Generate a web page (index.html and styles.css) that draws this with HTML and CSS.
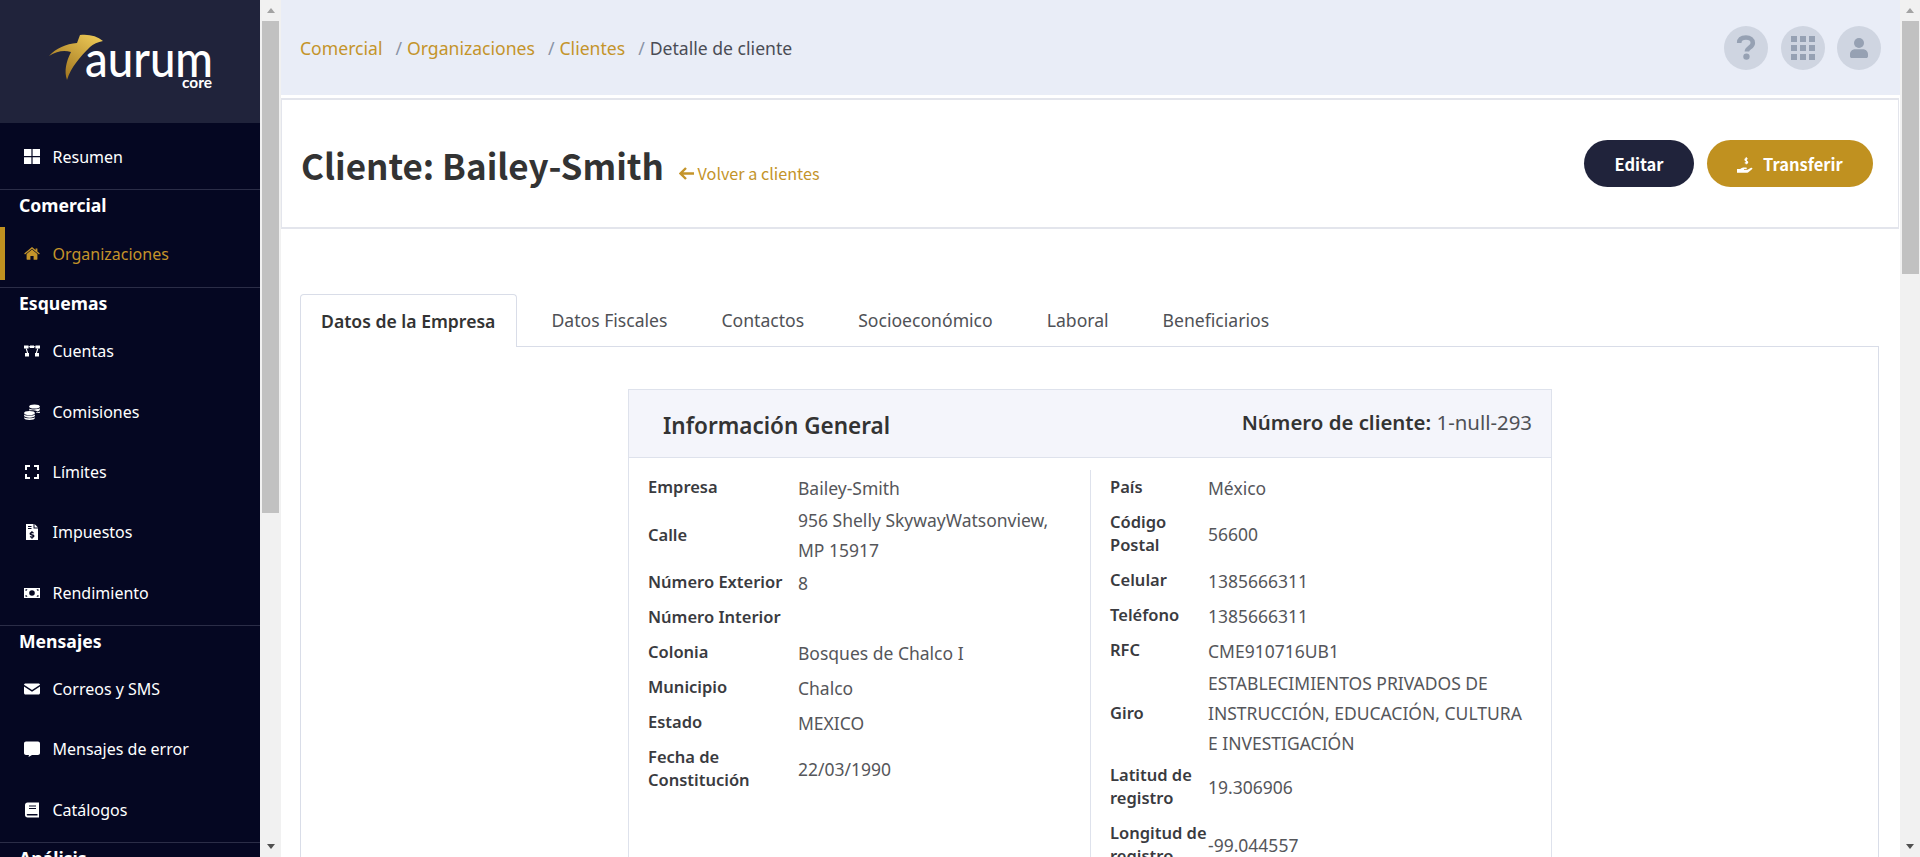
FILE: index.html
```html
<!DOCTYPE html>
<html lang="es">
<head>
  <meta charset="UTF-8" />
  <meta name="viewport" content="width=device-width, initial-scale=1" />
  <title>Detalle de cliente - Aurum Core</title>
  <link rel="stylesheet" href="styles.css">
</head>
<body>
  <aside class="sidebar">
    <div class="brand">
      <svg class="brand-logo" width="260" height="123" viewBox="0 0 260 123">
        <defs>
          <linearGradient id="gold" x1="1" y1="0" x2="0.2" y2="1">
            <stop offset="0" stop-color="#f2cf5a"/>
            <stop offset="1" stop-color="#9c701c"/>
          </linearGradient>
        </defs>
        <path fill="url(#gold)" d="M49 56C56 48 66 44 77 43L80 35C89 34 97 36 103 41C98 42 93 44 90 47C80 57 71 67 67 80C64 71 66 62 71 52C64 50 57 51 49 56Z"/>
        <text class="brand-name" x="85" y="77" textLength="128" lengthAdjust="spacingAndGlyphs">aurum</text>
        <text class="brand-sub" x="182" y="88" textLength="30" lengthAdjust="spacingAndGlyphs">core</text>
      </svg>
    </div>

    <nav class="menu">
      <div class="menu-group menu-group-top">
        <a class="menu-item">
          <svg class="menu-icon" viewBox="0 0 16 16"><path d="M0 0h7.400v7H0zM8.600 0H16v7H8.600zM0 8.200h7.400V15H0zM8.600 8.200H16V15H8.600z"/></svg>
          Resumen
        </a>
      </div>
      <div class="menu-group">
        <div class="menu-title">Comercial</div>
        <a class="menu-item active">
          <svg class="menu-icon" viewBox="0 0 16 16"><path d="M8 3.600 2.600 8v5.200c0 .3.200.5.500.5h3.300V10h3.200v3.700h3.300c.3 0 .5-.2.500-.5V8z"/><path d="M8 1 .2 7.400l.8 1L8 2.800l7 5.600.8-1L13.400 5.500V2.400h-1.800v1.500z"/></svg>
          Organizaciones
        </a>
      </div>
      <div class="menu-group">
        <div class="menu-title">Esquemas</div>
        <a class="menu-item">
          <svg class="menu-icon" viewBox="0 0 16 16"><path d="M0 2.500h4.500v3H0zM6 2.500h4v2.500H6zM11.500 2.500H16v3h-4.500zM1 10h4v3.500H1zM11 10h4v3.500h-4z"/><path d="M4.500 3.200H6v1H4.500zM10 3.200h1.500v1H10zM1.600 5.500h1.200l1.400 4.500H3zM13.200 5.500h1.200L13 10h-1.200z"/></svg>
          Cuentas
        </a>
        <a class="menu-item">
          <svg class="menu-icon" viewBox="0 0 16 16"><ellipse cx="10.500" cy="2.600" rx="5.300" ry="2"/><path d="M5.300 4.600c1 1.200 9 1.500 10.500-.5v1.600c0 .8-1.200 1.400-2.600 1.700-1.500-1-5.500-1.300-7.900-.9z"/><ellipse cx="5.500" cy="9" rx="5.400" ry="2"/><path d="M.1 10.400c1 1.600 9.600 1.600 10.800 0v1.400c0 1.100-2.400 1.900-5.400 1.900S.1 12.900.1 11.800z"/><path d="M.1 13.200c1 1.500 9.600 1.500 10.800 0v.8c0 1.200-2.400 2-5.400 2s-5.400-.8-5.400-2zM12 9h3.800V7.400c-1 .6-2.400 1-3.800 1.200z"/></svg>
          Comisiones
        </a>
        <a class="menu-item">
          <svg class="menu-icon" viewBox="0 0 16 16"><path d="M1 1h5v2H3v3H1zM10 1h5v5h-2V3h-3zM1 10h2v3h3v2H1zM13 10h2v5h-5v-2h3z"/></svg>
          Límites
        </a>
        <a class="menu-item">
          <svg class="menu-icon" viewBox="0 0 16 16"><path fill-rule="evenodd" d="M2 0h7.500v4.500H14V16H2zM4 2v1h3.500V2zM4 4v1h3.500V4zM7.400 7v1c-1.200.2-1.800.8-1.800 1.700 0 1 .8 1.400 2 1.700.9.200 1.100.4 1.100.7 0 .3-.3.500-.8.500-.5 0-1-.2-1.400-.5l-.8.900c.5.400 1.100.7 1.700.8v1h1.200v-1c1.200-.2 1.800-.9 1.800-1.800 0-1-.8-1.400-2-1.700-.9-.2-1.100-.4-1.100-.6 0-.3.300-.5.800-.5.400 0 .8.100 1.200.4l.7-.9c-.4-.3-1-.6-1.500-.7V7z"/><path d="M10.500 0 14 3.500h-3.500z"/></svg>
          Impuestos
        </a>
        <a class="menu-item">
          <svg class="menu-icon" viewBox="0 0 16 16"><path fill-rule="evenodd" d="M0 3h16v10H0zM8 5.200a2.800 2.800 0 1 0 0 5.600 2.800 2.800 0 0 0 0-5.600zM1.500 4.300v1.800a1.900 1.900 0 0 0 1.900-1.800zM12.600 4.300a1.900 1.900 0 0 0 1.900 1.800V4.300zM1.500 9.900v1.800h1.900a1.900 1.900 0 0 0-1.900-1.800zM14.500 9.900a1.900 1.900 0 0 0-1.900 1.800h1.900z"/></svg>
          Rendimiento
        </a>
      </div>
      <div class="menu-group">
        <div class="menu-title">Mensajes</div>
        <a class="menu-item">
          <svg class="menu-icon" viewBox="0 0 16 16"><path d="M1.500 2.500h13c.8 0 1.500.6 1.500 1.300L8 9 0 3.800c0-.7.700-1.300 1.500-1.300z"/><path d="M0 5.600V12c0 .8.700 1.500 1.500 1.500h13c.8 0 1.500-.7 1.500-1.500V5.600l-8 5.200z"/></svg>
          Correos y SMS
        </a>
        <a class="menu-item">
          <svg class="menu-icon" viewBox="0 0 16 16"><path d="M2 .5h12c1.100 0 2 .9 2 2v9.500c0 1.100-.9 2-2 2H8l-3.500 2 .5-2H2c-1.100 0-2-.9-2-2V2.500c0-1.100.9-2 2-2z"/></svg>
          Mensajes de error
        </a>
        <a class="menu-item">
          <svg class="menu-icon" viewBox="0 0 16 16"><path fill-rule="evenodd" d="M3.500 .5H15v15H3.500C2.100 15.500 1 14.400 1 13V3C1 1.600 2.100.5 3.500.5zM5 3.500v1h7v-1zM5 6v1h7V6zM3.500 12c-.5 0-.8.300-.8.700s.3.700.8.700h10V12z"/></svg>
          Catálogos
        </a>
      </div>
      <div class="menu-group">
        <div class="menu-title">Análisis</div>
      </div>
    </nav>
  </aside>

  <div class="scrollbar">
    <span class="arrow-up"></span>
    <div class="scroll-track"><div class="scroll-thumb thumb-side"></div></div>
    <span class="arrow-down"></span>
  </div>

  <main class="main">
    <header class="topbar">
      <ol class="breadcrumb">
        <li><a>Comercial</a></li>
        <li><a>Organizaciones</a></li>
        <li><a>Clientes</a></li>
        <li class="current">Detalle de cliente</li>
      </ol>
      <div class="top-actions">
        <span class="round-btn">
          <svg width="20" height="27" viewBox="0 0 22 28"><path class="round-stroke" d="M3.500 9C3.500 5 6.500 3 11 3s7.500 2.200 7.500 6c0 5-6.500 5-6.500 9.500"/><circle class="round-fill" cx="11.500" cy="24" r="3.500"/></svg>
        </span>
        <span class="round-btn">
          <svg width="24" height="24" viewBox="0 0 24 24"><path class="round-fill" d="M0 0h6v6H0zM9 0h6v6H9zM18 0h6v6h-6zM0 9h6v6H0zM9 9h6v6H9zM18 9h6v6h-6zM0 18h6v6H0zM9 18h6v6H9zM18 18h6v6h-6z"/></svg>
        </span>
        <span class="round-btn">
          <svg width="18" height="20" viewBox="0 0 18 20"><circle class="round-fill" cx="9" cy="5" r="5"/><path class="round-fill" d="M5 11.200h8c2.800 0 5 2.200 5 5v2c0 1-.8 1.800-1.800 1.800H1.800C.8 20 0 19.200 0 18.200v-2c0-2.800 2.200-5 5-5z"/></svg>
        </span>
      </div>
    </header>

    <section class="page-head">
      <div class="page-title">
        <h1>Cliente: Bailey-Smith</h1>
        <a class="back-link">
          <svg width="15" height="13" viewBox="0 0 15 13"><path d="M7 1 1.500 6.500 7 12M2 6.500h13" fill="none" stroke="#c4942a" stroke-width="2.400"/></svg>
          Volver a clientes
        </a>
      </div>
      <div class="page-actions">
        <button class="btn btn-dark">Editar</button>
        <button class="btn btn-gold">
          <svg width="17" height="17" viewBox="0 0 17 17"><path fill="#fff" d="M0 12h3.200c1-1 2-1.500 3-1.500h3c.8 0 1 1.300 0 1.500H7v.8h3.500l3.500-2c1-.5 2 .5 1 1.400l-4 3.300c-.4.300-.8.300-1.200.300H0z"/><path fill="none" stroke="#fff" stroke-width="1.200" d="M10.500 2.200C10 1.600 8 1.300 8 2.700c0 1.500 2.700 1 2.700 2.600 0 1.400-2.200 1.100-2.900.4M9.300 .3v7"/></svg>
          Transferir
        </button>
      </div>
    </section>

    <section class="content">
      <ul class="tabs">
        <li class="tab active">Datos de la Empresa</li>
        <li class="tab">Datos Fiscales</li>
        <li class="tab">Contactos</li>
        <li class="tab">Socioeconómico</li>
        <li class="tab">Laboral</li>
        <li class="tab">Beneficiarios</li>
      </ul>

      <div class="tab-panel">
        <div class="info-card">
          <div class="info-head">
            <h3>Información General</h3>
            <p class="client-number"><strong>Número de cliente:</strong> 1-null-293</p>
          </div>
          <div class="info-body">
            <dl class="info-col info-left">
              <dt>Empresa</dt><dd>Bailey-Smith</dd>
              <dt>Calle</dt><dd>956 Shelly SkywayWatsonview, MP 15917</dd>
              <dt>Número Exterior</dt><dd>8</dd>
              <dt>Número Interior</dt><dd></dd>
              <dt>Colonia</dt><dd>Bosques de Chalco I</dd>
              <dt>Municipio</dt><dd>Chalco</dd>
              <dt>Estado</dt><dd>MEXICO</dd>
              <dt>Fecha de Constitución</dt><dd>22/03/1990</dd>
            </dl>
            <dl class="info-col info-right">
              <dt>País</dt><dd>México</dd>
              <dt>Código Postal</dt><dd>56600</dd>
              <dt>Celular</dt><dd>1385666311</dd>
              <dt>Teléfono</dt><dd>1385666311</dd>
              <dt>RFC</dt><dd>CME910716UB1</dd>
              <dt>Giro</dt><dd>ESTABLECIMIENTOS PRIVADOS DE INSTRUCCIÓN, EDUCACIÓN, CULTURA E INVESTIGACIÓN</dd>
              <dt>Latitud de registro</dt><dd>19.306906</dd>
              <dt>Longitud de registro</dt><dd>-99.044557</dd>
            </dl>
          </div>
        </div>
      </div>
    </section>
  </main>

  <div class="scrollbar page-scrollbar">
    <span class="arrow-up"></span>
    <div class="scroll-track"><div class="scroll-thumb thumb-page"></div></div>
    <span class="arrow-down"></span>
  </div>
</body>
</html>
```

FILE: styles.css
```css
* {
  box-sizing: border-box;
}
body {
  font-family: "Noto Sans", Arial, sans-serif;
  font-size: 16px;
  background: #fff;
  color: #3a3b3f;
  display: flex;
  height: 100vh;
  margin: 0;
  overflow: hidden;
}

/* sidebar */
.sidebar {
  width: 260px;
  flex-shrink: 0;
  background: #050722;
  color: #fff;
  overflow: hidden;
}
.brand {
  height: 123px;
  background: #20233b;
}
.brand-logo {
  display: block;
}
.brand-name {
  font-family: Lato, sans-serif;
  font-size: 50px;
  font-weight: 500;
  fill: #fff;
}
.brand-sub {
  font-family: Lato, sans-serif;
  font-size: 16px;
  font-weight: 700;
  fill: #fff;
}
.menu-group {
  border-bottom: 1px solid #2b2d47;
  padding-bottom: 2px;
}
.menu-group-top {
  padding: 4px 0 2px;
}
.menu-title {
  height: 33px;
  line-height: 30px;
  padding-left: 19px;
  font-size: 17.600px;
  font-weight: 700;
}
.menu-item {
  display: flex;
  align-items: center;
  gap: 12.500px;
  height: 60.300px;
  padding-left: 24px;
  font-size: 16px;
  color: #fff;
}
.menu-icon {
  width: 16px;
  height: 16px;
  fill: #fff;
}
.menu-item.active {
  height: 53px;
  margin: 4px 0 5px;
  border-left: 5px solid #c09120;
  padding-left: 19px;
  color: #c4942a;
}
.menu-item.active .menu-icon {
  fill: #c4942a;
}

/* fake scrollbars */
.scrollbar {
  width: 21px;
  flex-shrink: 0;
  display: flex;
  flex-direction: column;
  align-items: center;
  background: #f1f1f1;
}
.page-scrollbar {
  width: 20px;
}
.arrow-up,
.arrow-down {
  width: 0;
  height: 0;
  margin: 8px 0;
  border-left: 4.500px solid transparent;
  border-right: 4.500px solid transparent;
}
.arrow-up {
  border-bottom: 5px solid #a3a3a3;
}
.arrow-down {
  border-top: 5px solid #505050;
}
.scroll-track {
  flex: 1;
  width: 100%;
}
.scroll-thumb {
  width: 17px;
  margin: 0 auto;
  background: #c1c1c1;
}
.thumb-side {
  height: 492px;
}
.thumb-page {
  height: 253px;
}

/* main */
.main {
  flex: 1;
  min-width: 0;
  overflow: hidden;
}
.topbar {
  height: 95px;
  background: #e9edf7;
  display: flex;
  justify-content: space-between;
  align-items: center;
  padding: 0 19px 0 19px;
}
.breadcrumb {
  display: flex;
  list-style: none;
  margin: 0;
  padding: 0;
  font-size: 17.600px;
}
.breadcrumb li + li::before {
  content: "/";
  color: #8a93a6;
  padding: 0 5px 0 13px;
}
.breadcrumb a {
  color: #c4942a;
}
.breadcrumb .current {
  color: #4a4c55;
}
.top-actions {
  display: flex;
  gap: 12.500px;
}
.round-btn {
  width: 44px;
  height: 44px;
  border-radius: 50%;
  background: #cfd5e1;
  display: flex;
  align-items: center;
  justify-content: center;
}
.round-fill {
  fill: #96a1b3;
}
.round-stroke {
  fill: none;
  stroke: #96a1b3;
  stroke-width: 5;
}
.page-head {
  height: 131px;
  margin: 3px 1px 0 0;
  border: 2px solid #e3e5ec;
  border-width: 2px 1px 2px 1px;
  display: flex;
  justify-content: space-between;
  align-items: center;
  padding: 0 25px 0 19px;
}
.page-title {
  display: flex;
  align-items: baseline;
  gap: 15px;
  padding-top: 2px;
}
h1 {
  margin: 0;
  font-family: "Noto Sans CJK JP", "Noto Sans", sans-serif;
  font-size: 35px;
  font-weight: 700;
  color: #333;
}
.back-link {
  font-family: "Noto Sans CJK JP", "Noto Sans", sans-serif;
  font-size: 16.200px;
  color: #c4942a;
}
.page-actions {
  display: flex;
  gap: 13px;
}
.btn {
  height: 47px;
  border: none;
  border-radius: 24px;
  color: #fff;
  font-family: "Noto Sans CJK JP", "Noto Sans", sans-serif;
  font-size: 16.500px;
  font-weight: 700;
}
.btn-dark {
  width: 110px;
  background: #20233b;
}
.btn-gold {
  width: 166px;
  background: #c09120;
}
.btn-gold svg {
  vertical-align: -3px;
  margin-right: 5px;
}

/* tabs */
.content {
  padding: 65px 21px 0 19px;
}
.tabs {
  display: flex;
  list-style: none;
  margin: 0;
  padding: 0;
  height: 52px;
}
.tab {
  padding: 0 27px;
  line-height: 52px;
  font-size: 17.600px;
  color: #4f5156;
}
.tab.active {
  padding: 0 21px 0 20px;
  margin-right: 7px;
  height: 53px;
  position: relative;
  z-index: 1;
  background: #fff;
  border: 1px solid #d9dde8;
  border-bottom: none;
  border-radius: 4px 4px 0 0;
  font-weight: 600;
  color: #333;
}
.tab-panel {
  border: 1px solid #d9dde8;
  padding: 42px 0 40px 327px;
  height: 700px;
}
.info-card {
  width: 924px;
  border: 1px solid #dee2ec;
}
.info-head {
  height: 68px;
  background: #f4f5fb;
  border-bottom: 1px solid #dee2ec;
  display: flex;
  justify-content: space-between;
  padding: 0 19px 0 34px;
}
.info-head h3 {
  margin: 20px 0 0;
  font-size: 22.500px;
  font-weight: 600;
  line-height: 32px;
  color: #333;
}
.client-number {
  margin: 18px 0 0;
  font-size: 20.400px;
  line-height: 28px;
  color: #4f5156;
}
.client-number strong {
  font-weight: 600;
  color: #333;
}
.info-body {
  display: flex;
  padding-top: 12px;
}
.info-col {
  margin: 0;
  padding-left: 19px;
  display: grid;
  align-items: center;
  align-content: start;
  width: 50%;
}
.info-left {
  grid-template-columns: 150px 1fr;
  padding-right: 20px;
}
.info-right {
  grid-template-columns: 98px 1fr;
  border-left: 1px solid #dee2ec;
  padding-right: 16px;
}
.info-col dt {
  padding: 5px 0 7px;
  line-height: 23px;
  font-size: 16.500px;
  font-weight: 600;
  color: #3a3b3f;
}
.info-col dd {
  margin: 0;
  line-height: 30px;
  font-size: 17.500px;
  color: #55565a;
}
```
